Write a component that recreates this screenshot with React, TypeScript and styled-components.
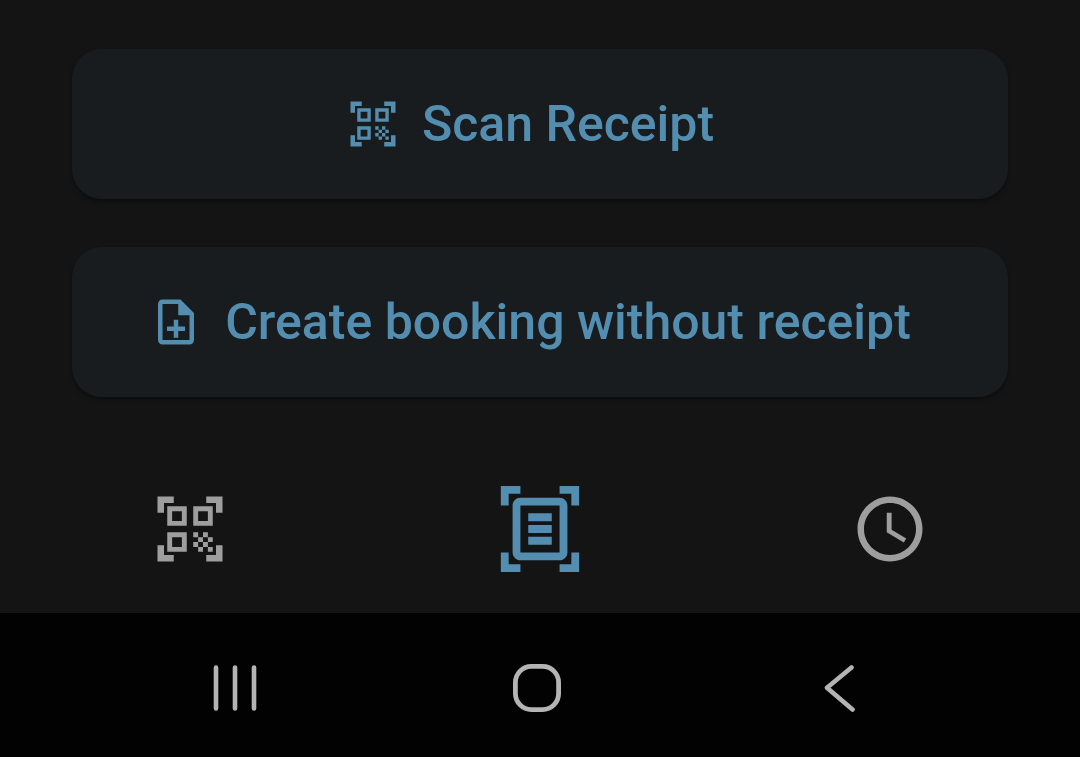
import React from 'react';
import styled, { createGlobalStyle } from 'styled-components';
import {
  MdQrCodeScanner,
  MdOutlineNoteAdd,
  MdOutlineDocumentScanner,
  MdSchedule,
} from 'react-icons/md';

const GlobalStyle = createGlobalStyle`
  * { box-sizing: border-box; }
  body { margin: 0; background: #141414; font-family: Roboto, sans-serif; }
`;

const Screen = styled.div`
  display: flex;
  flex-direction: column;
  min-height: 100vh;
`;

const Actions = styled.main`
  display: flex;
  flex-direction: column;
  gap: 48px;
  padding: 49px 72px 48px;
`;

const ActionButton = styled.button`
  display: flex;
  align-items: center;
  justify-content: center;
  gap: 22px;
  min-height: 150px;
  padding: 0 40px 0 20px;
  border: 0;
  border-radius: 30px;
  background: #181c1e;
  box-shadow: 0 3px 4px rgba(0, 0, 0, 0.35);
  color: #538eb0;
  font-family: inherit;
  font-size: 50px;
  font-weight: 500;
  line-height: 60px;

  svg {
    flex: none;
  }
`;

const Tabs = styled.nav`
  display: grid;
  grid-template-columns: repeat(3, 1fr);
  align-items: center;
  height: 168px;
  padding: 0 15px;
`;

const Tab = styled.button<{ $active?: boolean }>`
  display: flex;
  justify-content: center;
  border: 0;
  padding: 0;
  background: none;
  color: ${(p) => (p.$active ? '#538eb0' : '#9e9e9e')};
`;

const SystemBar = styled.footer`
  display: grid;
  grid-template-columns: repeat(3, 1fr);
  align-items: center;
  flex: 1;
  min-height: 144px;
  padding: 6px 90px 0 84px;
  background: #020202;
`;

const SystemButton = styled.button`
  display: flex;
  justify-content: center;
  border: 0;
  padding: 0;
  background: none;
  color: #b4b4b4;

  svg {
    fill: none;
    stroke: currentColor;
    stroke-linecap: round;
    stroke-linejoin: round;
  }
`;

export default function App() {
  return (
    <Screen>
      <GlobalStyle />
      <Actions>
        <ActionButton>
          <MdQrCodeScanner size={54} />
          Scan Receipt
        </ActionButton>
        <ActionButton>
          <MdOutlineNoteAdd size={54} />
          Create booking without receipt
        </ActionButton>
      </Actions>
      <Tabs>
        <Tab aria-label="Scan">
          <MdQrCodeScanner size={78} />
        </Tab>
        <Tab $active aria-label="Bookings">
          <MdOutlineDocumentScanner size={94} />
        </Tab>
        <Tab aria-label="History">
          <MdSchedule size={78} />
        </Tab>
      </Tabs>
      <SystemBar>
        <SystemButton aria-label="Recent apps">
          <svg width="48" height="48" viewBox="0 0 48 48" strokeWidth="4.6">
            <path d="M5 3.5v41M24 3.5v41M43 3.5v41" />
          </svg>
        </SystemButton>
        <SystemButton aria-label="Home">
          <svg width="48" height="48" viewBox="0 0 48 48" strokeWidth="4.8">
            <rect x="2.4" y="2.4" width="43.2" height="43.2" rx="16" />
          </svg>
        </SystemButton>
        <SystemButton aria-label="Back">
          <svg width="48" height="48" viewBox="0 0 48 48" strokeWidth="4.6">
            <path d="M36.5 3.5L12 23.7L37.5 45.5" />
          </svg>
        </SystemButton>
      </SystemBar>
    </Screen>
  );
}
